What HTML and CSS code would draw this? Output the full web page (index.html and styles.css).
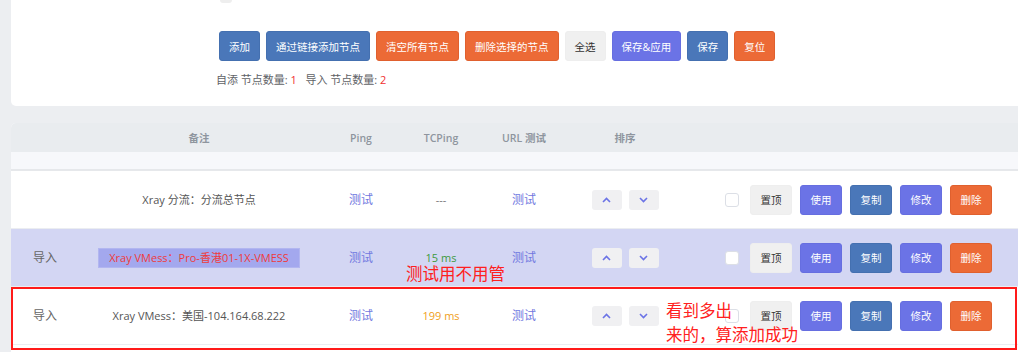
FILE: index.html
```html
<!DOCTYPE html>
<html lang="zh-CN">
<head>
    <meta charset="UTF-8">
    <meta name="viewport" content="width=device-width, initial-scale=1.0">
    <title>节点列表</title>

    <link rel="stylesheet" href="styles.css">
</head>

<body>
  <div class="page">
    <div class="panel">
      <div class="nub"></div>
      <div class="toolbar">
        <button class="btn blue">添加</button>
        <button class="btn blue">通过链接添加节点</button>
        <button class="btn orange">清空所有节点</button>
        <button class="btn orange">删除选择的节点</button>
        <button class="btn gray">全选</button>
        <button class="btn purple">保存&amp;应用</button>
        <button class="btn blue">保存</button>
        <button class="btn orange">复位</button>
      </div>
      <div class="count">自添 节点数量: <em>1</em>&nbsp;&nbsp; 导入 节点数量: <em>2</em></div>
    </div>

    <div class="table">
      <div class="row head">
        <div></div>
        <div>备注</div>
        <div>Ping</div>
        <div>TCPing</div>
        <div>URL 测试</div>
        <div>排序</div>
        <div></div>
      </div>
      <div class="spacer"></div>

      <div class="row">
        <div class="group"></div>
        <div>Xray 分流：分流总节点</div>
        <div class="link">测试</div>
        <div class="muted">---</div>
        <div class="link">测试</div>
        <div class="sort">
          <span class="arrow"><svg width="9" height="6" viewBox="0 0 9 6"><path d="M1 5 4.5 1.5 8 5" fill="none" stroke="#6b73e6" stroke-width="1.6"/></svg></span>
          <span class="arrow"><svg width="9" height="6" viewBox="0 0 9 6"><path d="M1 1 4.5 4.5 8 1" fill="none" stroke="#6b73e6" stroke-width="1.6"/></svg></span>
        </div>
        <div class="actions">
          <span class="check"></span>
          <button class="btn gray">置顶</button>
          <button class="btn purple">使用</button>
          <button class="btn blue">复制</button>
          <button class="btn purple">修改</button>
          <button class="btn orange">删除</button>
        </div>
      </div>

      <div class="row current">
        <div class="group">导入</div>
        <div><span class="hl">Xray VMess：Pro-香港01-1X-VMESS</span></div>
        <div class="link">测试</div>
        <div class="ok">15 ms</div>
        <div class="link">测试</div>
        <div class="sort">
          <span class="arrow"><svg width="9" height="6" viewBox="0 0 9 6"><path d="M1 5 4.5 1.5 8 5" fill="none" stroke="#6b73e6" stroke-width="1.6"/></svg></span>
          <span class="arrow"><svg width="9" height="6" viewBox="0 0 9 6"><path d="M1 1 4.5 4.5 8 1" fill="none" stroke="#6b73e6" stroke-width="1.6"/></svg></span>
        </div>
        <div class="actions">
          <span class="check"></span>
          <button class="btn gray">置顶</button>
          <button class="btn purple">使用</button>
          <button class="btn blue">复制</button>
          <button class="btn purple">修改</button>
          <button class="btn orange">删除</button>
        </div>
      </div>

      <div class="row">
        <div class="group">导入</div>
        <div>Xray VMess：美国-104.164.68.222</div>
        <div class="link">测试</div>
        <div class="slow">199 ms</div>
        <div class="link">测试</div>
        <div class="sort">
          <span class="arrow"><svg width="9" height="6" viewBox="0 0 9 6"><path d="M1 5 4.5 1.5 8 5" fill="none" stroke="#6b73e6" stroke-width="1.6"/></svg></span>
          <span class="arrow"><svg width="9" height="6" viewBox="0 0 9 6"><path d="M1 1 4.5 4.5 8 1" fill="none" stroke="#6b73e6" stroke-width="1.6"/></svg></span>
        </div>
        <div class="actions">
          <span class="check"></span>
          <button class="btn gray">置顶</button>
          <button class="btn purple">使用</button>
          <button class="btn blue">复制</button>
          <button class="btn purple">修改</button>
          <button class="btn orange">删除</button>
        </div>
      </div>

      <!-- 截图上的标注 -->
      <div class="mark-box"></div>
      <div class="note note-a">测试用不用管</div>
      <div class="note note-b">看到多出<br>来的，算添加成功</div>
    </div>
  </div>
</body>
</html>
```

FILE: styles.css
```css
* {
  margin: 0;
  padding: 0;
  box-sizing: border-box;
}

body {
  background: #eceef1;
  overflow: hidden;
  font-family: "Open Sans", "Noto Sans CJK SC", sans-serif;
  font-size: 11px;
  color: #555;
}

.page {
  width: 1080px;
  padding-left: 11px;
}

.panel {
  position: relative;
  height: 106px;
  background: #fff;
  border-radius: 0 0 0 5px;
}

.nub {
  position: absolute;
  left: 209px;
  top: 0;
  width: 12px;
  height: 3px;
  background: #eee;
  border-radius: 0 0 3px 3px;
}

.toolbar {
  display: flex;
  gap: 6px;
  padding: 31px 0 0 208px;
}

.btn {
  height: 30px;
  padding: 0 9px;
  border: 1px solid transparent;
  border-radius: 3px;
  font-family: "Open Sans", "Noto Sans CJK SC", sans-serif;
  font-size: 10.5px;
  color: #fff;
  background: #f0f0f0;
}

.btn.blue {
  background: #4a77b9;
  border-color: #4470b0;
}

.btn.orange {
  background: #ec6a36;
  border-color: #e0602e;
}

.btn.purple {
  background: #6b73e6;
  border-color: #666ee0;
}

.btn.gray {
  background: #f0f0f0;
  border-color: #eee;
  color: #333;
}

.count {
  margin: 12px 0 0 205px;
  font-size: 11px;
  line-height: 14px;
  color: #606266;
}

.count em {
  font-style: normal;
  color: #f03030;
}

.table {
  position: relative;
  margin-top: 17px;
  padding-bottom: 20px;
  background: #fff;
  border-radius: 5px 0 0 0;
}

.row {
  display: grid;
  grid-template-columns: 69px 238px 86px 74px 92px 110px 1fr;
  align-items: center;
  height: 58px;
  line-height: 14px;
  border-bottom: 1px solid #ebedf1;
  text-align: center;
}

.row.head {
  height: 29px;
  background: #e9ecef;
  border-radius: 5px 0 0 0;
  border-bottom: 0;
  font-size: 10.5px;
  font-weight: 600;
  color: #8e959e;
}

.spacer {
  height: 19px;
  background: #f7f8fb;
  border-bottom: 2px solid #e6e8eb;
}

.row.current {
  background: #d3d6f3;
}

.row .group {
  text-align: left;
  padding-left: 22px;
  font-size: 12px;
  color: #666;
}

.link {
  color: #7178e0;
  font-size: 12px;
}

.muted {
  color: #777;
}

.ok {
  color: #3d9a3d;
}

.slow {
  color: #f0a020;
}

.hl {
  display: inline-block;
  padding: 2px 10px;
  background: #a3a8ee;
  border: 1px solid #b2b6f0;
  color: #ef3b3b;
}

.sort {
  display: flex;
  justify-content: center;
  gap: 7px;
}

.arrow {
  display: flex;
  align-items: center;
  justify-content: center;
  width: 30px;
  height: 20px;
  background: #f0f0f2;
  border-radius: 3px;
}

.actions {
  display: flex;
  align-items: center;
  gap: 8px;
  padding-left: 45px;
}

.actions .btn {
  width: 42px;
  padding: 0;
}

.check {
  width: 14px;
  height: 14px;
  margin-right: 3px;
  background: #fff;
  border: 1px solid #dcdfe6;
  border-radius: 3px;
}

.mark-box {
  position: absolute;
  left: 0;
  top: 164px;
  width: 1006px;
  height: 63px;
  border: 2px solid #ff1a1a;
}

.note {
  position: absolute;
  color: #ff2020;
  font-family: "Noto Sans CJK SC", sans-serif;
  font-size: 16.5px;
}

.note-a {
  left: 395px;
  top: 141px;
  line-height: 18px;
}

.note-b {
  left: 655px;
  top: 175px;
  line-height: 24px;
}
```
